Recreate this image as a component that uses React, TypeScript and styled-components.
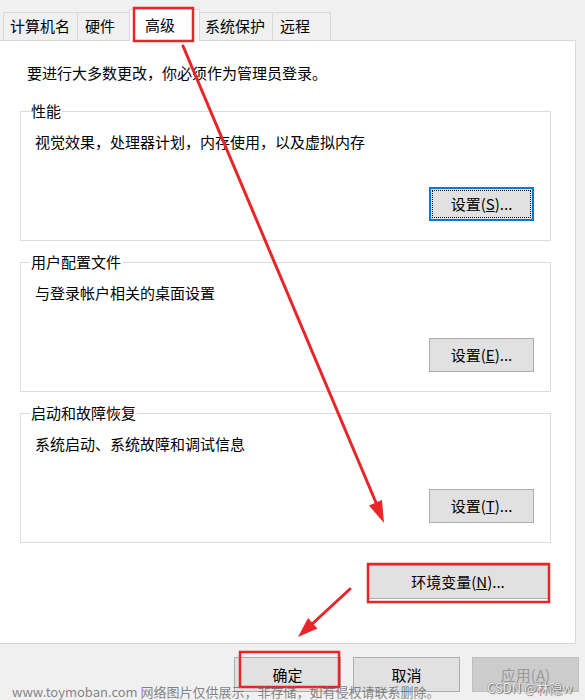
import React from "react";
import styled, { createGlobalStyle } from "styled-components";

const GlobalStyle = createGlobalStyle`
  html, body {
    margin: 0;
    padding: 0;
    width: 585px;
    height: 700px;
    overflow: hidden;
    background: #f0f0f0;
  }
  body {
    font-family: "Noto Sans CJK SC", "Noto Sans", sans-serif;
  }
`;

const Root = styled.div`
  position: relative;
  box-sizing: border-box;
  width: 585px;
  height: 700px;
  padding-top: 9px;
  font-size: 15px;
  color: #000;
`;

const TabStrip = styled.div`
  display: flex;
  align-items: flex-end;
  height: 31px;
  padding-left: 3px;
`;

const Tab = styled.div<{ $w: number; $pl: number; $ml?: number; $mr?: number; $active?: boolean }>`
  box-sizing: border-box;
  flex: none;
  width: ${(p) => p.$w}px;
  padding-left: ${(p) => p.$pl}px;
  margin-left: ${(p) => p.$ml ?? 0}px;
  margin-right: ${(p) => p.$mr ?? 0}px;
  line-height: 20px;
  white-space: nowrap;
  border: 1px solid #d9d9d9;
  border-bottom: none;
  height: ${(p) => (p.$active ? 32 : 28)}px;
  padding-top: ${(p) => (p.$active ? 5 : 3)}px;
  background: ${(p) => (p.$active ? "#ffffff" : "#f0f0f0")};
  ${(p) => (p.$active ? "position: relative; z-index: 1; margin-bottom: -1px;" : "")}
`;

const Panel = styled.div`
  box-sizing: border-box;
  width: 576px;
  height: 604px;
  background: #ffffff;
  border: 1px solid #d9d9d9;
  border-left: none;
  padding: 22px 24px 0 20px;
`;

const Intro = styled.div`
  margin-left: 7px;
  line-height: 20px;
`;

const Group = styled.fieldset<{ $mt: number }>`
  box-sizing: border-box;
  width: 531px;
  min-width: 0;
  margin: ${(p) => p.$mt}px 0 0 0;
  border: 1px solid #dcdcdc;
  padding: 11px 16px 19px 14px;
`;

const Legend = styled.legend`
  margin-left: -5px;
  padding: 0 1px;
  line-height: 20px;
  font-size: 15px;
`;

const Desc = styled.div`
  line-height: 20px;
`;

const ButtonRow = styled.div`
  display: flex;
  justify-content: flex-end;
  margin-top: 35px;
`;

const Btn = styled.button<{ $w: number; $h?: number; $focus?: boolean }>`
  box-sizing: border-box;
  flex: none;
  width: ${(p) => p.$w}px;
  height: ${(p) => p.$h ?? 34}px;
  padding: 0;
  font-family: inherit;
  font-size: 15px;
  line-height: 20px;
  color: #000;
  background: #e1e1e1;
  border: 1px solid #adadad;
  ${(p) =>
    p.$focus
      ? "border: 2px solid #0078d7; outline: 1px dotted #111; outline-offset: -4px;"
      : ""}
  &:disabled {
    background: #cccccc;
    border-color: #bfbfbf;
    color: #9a9a9a;
  }
`;

const EnvRow = styled.div`
  display: flex;
  justify-content: flex-end;
  margin-top: 22px;
  padding-right: 2px;
`;

const BottomBar = styled.div`
  display: flex;
  justify-content: flex-end;
  gap: 12px;
  margin-top: 13px;
  padding-right: 6px;
`;

const Watermark = styled.div`
  position: absolute;
  left: 12px;
  top: 683px;
  font-size: 13px;
  line-height: 18px;
  color: rgba(110, 110, 110, 0.85);
  white-space: nowrap;
  z-index: 5;
`;

const CsdnMark = styled.div`
  position: absolute;
  left: 487px;
  top: 679px;
  font-size: 13px;
  line-height: 18px;
  color: rgba(255, 255, 255, 0.92);
  text-shadow: 0 0 1px #555, 1px 1px 1px rgba(0, 0, 0, 0.45);
  white-space: nowrap;
  z-index: 5;
`;

const Overlay = styled.svg`
  position: absolute;
  left: 0;
  top: 0;
  width: 585px;
  height: 700px;
  pointer-events: none;
  z-index: 4;
`;

const RED = "#e8262a";

function Annotations() {
  return (
    <Overlay viewBox="0 0 585 700">
      <rect x="134" y="8" width="59" height="33" fill="none" stroke={RED} strokeWidth="2.5" />
      <rect x="368" y="564" width="181" height="38" fill="none" stroke={RED} strokeWidth="2.5" />
      <rect x="240" y="652" width="99" height="35" fill="none" stroke={RED} strokeWidth="2.5" />
      <line x1="183" y1="46" x2="377" y2="505" stroke={RED} strokeWidth="3" strokeLinecap="round" />
      <polygon points="384,523 382,500 369,505.5" fill={RED} />
      <line x1="350" y1="589" x2="311" y2="625" stroke={RED} strokeWidth="3" strokeLinecap="round" />
      <polygon points="298,637 317.5,628.5 308,618" fill={RED} />
    </Overlay>
  );
}

export default function App() {
  return (
    <>
      <GlobalStyle />
      <Root>
        <TabStrip>
          <Tab $w={75} $pl={6}>计算机名</Tab>
          <Tab $w={55} $pl={7} $ml={-1}>硬件</Tab>
          <Tab $w={71} $pl={15} $ml={-3} $mr={-3} $active>高级</Tab>
          <Tab $w={76} $pl={7}>系统保护</Tab>
          <Tab $w={59} $pl={7} $ml={-1}>远程</Tab>
        </TabStrip>
        <Panel>
          <Intro>要进行大多数更改，你必须作为管理员登录。</Intro>
          <Group $mt={18}>
            <Legend>性能</Legend>
            <Desc>视觉效果，处理器计划，内存使用，以及虚拟内存</Desc>
            <ButtonRow>
              <Btn $w={105} $focus>设置(<u>S</u>)...</Btn>
            </ButtonRow>
          </Group>
          <Group $mt={11}>
            <Legend>用户配置文件</Legend>
            <Desc>与登录帐户相关的桌面设置</Desc>
            <ButtonRow>
              <Btn $w={105}>设置(<u>E</u>)...</Btn>
            </ButtonRow>
          </Group>
          <Group $mt={11}>
            <Legend>启动和故障恢复</Legend>
            <Desc>系统启动、系统故障和调试信息</Desc>
            <ButtonRow>
              <Btn $w={105}>设置(<u>T</u>)...</Btn>
            </ButtonRow>
          </Group>
          <EnvRow>
            <Btn $w={182}>环境变量(<u>N</u>)...</Btn>
          </EnvRow>
        </Panel>
        <BottomBar>
          <Btn $w={107} $h={35}>确定</Btn>
          <Btn $w={107} $h={35}>取消</Btn>
          <Btn $w={107} $h={35} disabled>应用(<u>A</u>)</Btn>
        </BottomBar>
        <Annotations />
        <Watermark>www.toymoban.com 网络图片仅供展示，非存储，如有侵权请联系删除。</Watermark>
        <CsdnMark>CSDN @林隐w</CsdnMark>
      </Root>
    </>
  );
}
